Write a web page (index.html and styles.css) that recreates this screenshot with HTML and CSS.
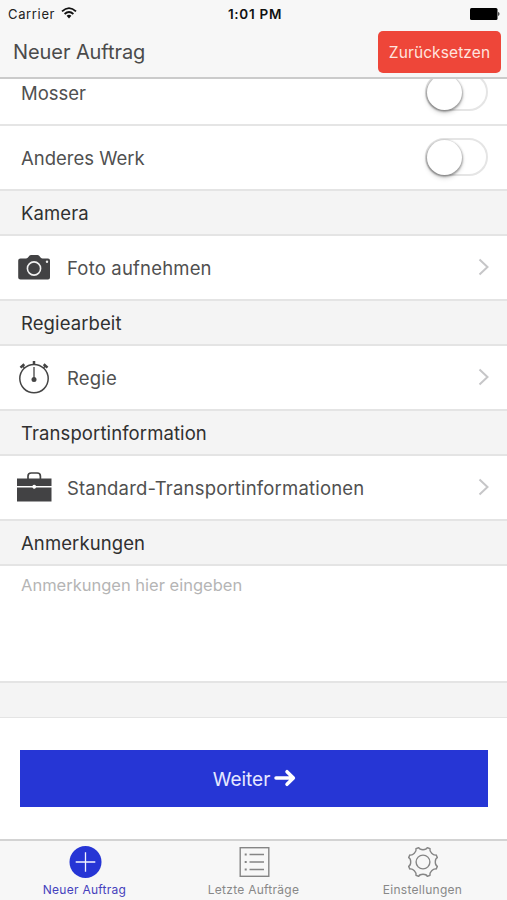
FILE: index.html
```html
<!DOCTYPE html>
<html lang="de">
<head>
<meta charset="utf-8">
<title>Neuer Auftrag</title>
<link rel="stylesheet" href="styles.css">
</head>
<body>
<div class="app">
  <header class="header">
    <div class="status">
      <div class="carrier"><span class="carrier-name">Carrier</span>
        <svg class="wifi" width="16" height="12" viewBox="0 0 16 12" fill="none" stroke="#111" stroke-width="1.8"><path d="M1 4.4Q8-2.2 15 4.4M3.6 7Q8 3 12.4 7"/><path d="M5.6 8.8Q8 6.8 10.4 8.8L8 11.4Z" fill="#111" stroke="none"/></svg>
      </div>
      <span class="clock">1:01 PM</span>
      <svg class="battery" width="31" height="12" viewBox="0 0 31 12"><rect width="27.500" height="12" rx="1.500"/><path d="M28.300 3.800Q30.600 6 28.300 8.200Z"/></svg>
    </div>
    <div class="nav">
      <h1 class="title">Neuer Auftrag</h1>
      <button class="reset">Zurücksetzen</button>
    </div>
  </header>

  <main class="content">
    <div class="row row-scrolled"><span class="label short">Mosser</span><span class="toggle"><span class="knob"></span></span></div>
    <div class="row"><span class="label short">Anderes Werk</span><span class="toggle"><span class="knob"></span></span></div>

    <h2 class="section">Kamera</h2>
    <div class="row">
      <svg class="icon" width="36" height="36" viewBox="0 0 36 36"><path fill="#424244" d="M4.500 9.500H10Q11 9.500 11.700 8.700L13.600 6.600Q14.200 6 15 6H21.500Q22.300 6 22.900 6.600L24.800 8.700Q25.500 9.500 26.500 9.500H32Q34 9.500 34 11.500V28.500Q34 30.500 32 30.500H4.500Q2.200 30.500 2.200 28.500V11.500Q2.200 9.500 4.500 9.500Z"/><circle cx="18" cy="19.500" r="6.600" fill="none" stroke="#f1f1f1" stroke-width="1.600"/><circle cx="31" cy="12.800" r="1.200" fill="#eee"/></svg>
      <span class="label">Foto aufnehmen</span>
      <svg class="chevron" width="12" height="18" viewBox="0 0 12 18"><path d="M1.500 1.500L9.500 9L1.500 16.500"/></svg>
    </div>

    <h2 class="section">Regiearbeit</h2>
    <div class="row">
      <svg class="icon" width="36" height="36" viewBox="0 0 36 36" fill="none" stroke="#454545"><circle cx="18" cy="19.600" r="14.200" stroke-width="1.500"/><path d="M18 8V21" stroke-width="1.300"/><path d="M18 2V6" stroke-width="2.500"/><path d="M4.500 8.600L8.300 5.200M27.700 5.200L31.500 8.600" stroke-width="2.600"/><path d="M6.200 6.500L8.600 9M29.800 6.500L27.400 9" stroke-width="1.500"/><circle cx="18" cy="20.500" r="2.500" fill="#454545" stroke="none"/></svg>
      <span class="label">Regie</span>
      <svg class="chevron" width="12" height="18" viewBox="0 0 12 18"><path d="M1.500 1.500L9.500 9L1.500 16.500"/></svg>
    </div>

    <h2 class="section">Transportinformation</h2>
    <div class="row">
      <svg class="icon" width="36" height="36" viewBox="0 0 36 36"><path fill="none" stroke="#444" stroke-width="1.700" d="M12 10V7.200Q12 4 15.200 4H21.200Q24.400 4 24.400 7.200V10"/><path fill="#424244" d="M1 9.500H35.500V17H20Q19.500 15.700 18.200 15.700T16.400 17H1ZM1 18.600H16.400Q17 19.800 18.200 19.800T20 18.600H35.500V32.500H1Z"/><circle cx="18.200" cy="17.800" r="1.400" fill="#fff"/></svg>
      <span class="label">Standard-Transportinformationen</span>
      <svg class="chevron" width="12" height="18" viewBox="0 0 12 18"><path d="M1.500 1.500L9.500 9L1.500 16.500"/></svg>
    </div>

    <h2 class="section">Anmerkungen</h2>
    <div class="notes">Anmerkungen hier eingeben</div>
    <div class="divider"></div>
    <div class="action">
      <button class="next"><span>Weiter</span><svg width="22" height="18" viewBox="0 0 22 18" fill="none" stroke="#fff" stroke-width="3.500" stroke-linejoin="round"><path stroke-linecap="round" d="M2 9H18.500M13 2.700L19.400 9L13 15.300"/></svg></button>
    </div>
  </main>

  <nav class="tabs">
    <a class="tab active">
      <svg width="34" height="34" viewBox="0 0 34 34"><circle cx="17.500" cy="17" r="16" fill="#2635d5"/><path d="M7.700 17H27.300M17.500 7.200V26.800" stroke="#f4f4ff" stroke-width="1.300"/></svg>
      <span>Neuer Auftrag</span>
    </a>
    <a class="tab">
      <svg width="34" height="34" viewBox="0 0 34 34" fill="none" stroke="#858585" stroke-width="1.400"><rect x="3.200" y="2.700" width="28.600" height="28.600"/><path d="M12.500 9.500H27M12.500 17H27M12.500 24.500H27"/><path d="M7.700 9.500H9.700M7.700 17H9.700M7.700 24.500H9.700" stroke-width="2"/></svg>
      <span>Letzte Aufträge</span>
    </a>
    <a class="tab">
      <svg width="34" height="34" viewBox="-17 -17 34 34" fill="none" stroke="#858585" stroke-width="1.400" stroke-linejoin="round"><circle r="6.900"/><path d="M-4.390-14.340C-3-11.600 3-11.600 4.390-14.340L7.040-13.240C6.080-10.320 10.320-6.080 13.240-7.040L14.340-4.390C11.600-3 11.600 3 14.340 4.390L13.240 7.040C10.320 6.080 6.080 10.320 7.040 13.240L4.390 14.340C3 11.600-3 11.600-4.390 14.340L-7.040 13.240C-6.080 10.320-10.320 6.080-13.240 7.040L-14.340 4.390C-11.600 3-11.600-3-14.340-4.390L-13.240-7.040C-10.320-6.080-6.080-10.320-7.040-13.240Z"/></svg>
      <span>Einstellungen</span>
    </a>
  </nav>
</div>
</body>
</html>
```

FILE: styles.css
```css
* { box-sizing: border-box; }
body { margin: 0; background: #fff; font-family: Inter, Roboto, sans-serif; color: #505050; }
h1, h2 { margin: 0; font-weight: 400; }
button { border: 0; padding: 0; font-family: inherit; }
svg { flex: none; display: block; }
.app { width: 507px; height: 900px; display: flex; flex-direction: column; overflow: hidden; }

.header { position: relative; z-index: 1; flex: none; height: 79px; background: #f7f7f7; border-bottom: 2px solid #cbcbcb; }
.status { display: grid; grid-template-columns: 1fr auto 1fr; align-items: center; height: 27px; padding: 0 5px 0 8px; color: #222; font-size: 13px; }
.carrier { display: flex; align-items: center; gap: 6px; letter-spacing: .65px; }
.wifi { margin-top: -2px; }
.clock { color: #111; font-size: 13.5px; font-weight: 600; letter-spacing: .7px; }
.battery { justify-self: end; margin-right: 1px; }
.nav { display: flex; align-items: center; justify-content: space-between; height: 50px; padding: 0 6px 0 13px; }
.title { font-size: 20px; letter-spacing: -.08px; color: #4b4b4b; }
.reset { width: 123px; height: 42px; border-radius: 5px; background: #ee4639; color: #ffe4df; font-size: 15.5px; letter-spacing: .1px; }

.content { flex: 1; min-height: 0; overflow: hidden; }
.row { display: flex; align-items: center; height: 63px; padding: 0 17px 0 21px; }
.row-scrolled { height: 65px; margin-top: -18px; border-bottom: 2px solid #e5e5e5; }
.label { font-size: 18.5px; letter-spacing: .18px; white-space: nowrap; }
.short { letter-spacing: 0; }
.icon { margin: -1px 15px 0 -5px; }
.chevron { margin: -1px 0 0 auto; fill: none; stroke: #c6c6c8; stroke-width: 2; }
.toggle { width: 63px; height: 38px; margin: -2px 2px 0 auto; border: 2px solid #e5e5e5; border-radius: 19px; }
.knob { display: block; width: 35px; height: 35px; border-radius: 50%; background: #fff; box-shadow: 0 1px 2px 1px rgba(0,0,0,.3), 0 3px 5px rgba(0,0,0,.16); }
.section { display: flex; align-items: center; height: 47px; padding-left: 21px; border: solid #e4e4e4; border-width: 2px 0; background: #f4f4f4; color: #303030; font-size: 18.5px; letter-spacing: .1px; }
.notes { height: 115px; padding: 9px 21px; color: #b5b5b5; font-size: 16.5px; line-height: 21px; }
.divider { height: 37px; border: solid #e4e4e4; border-width: 2px 0 1px; background: #f4f4f4; }
.action { padding: 32px 19px 0 20px; }
.next { display: flex; align-items: center; justify-content: center; gap: 4px; width: 100%; height: 57px; padding: 1px 0 0 1px; background: #2636d5; color: #e5e8ff; font-size: 19px; }
.next svg { margin-top: -2px; }

.tabs { flex: none; display: grid; grid-template-columns: repeat(3, 1fr); height: 61px; border-top: 2px solid #d3d3d3; background: #f7f7f7; }
.tab { display: flex; flex-direction: column; align-items: center; padding-top: 4px; color: #888; font-size: 12px; line-height: 16px; letter-spacing: .27px; }
.tab span { margin-top: 3px; }
.active { color: #4541bd; }
```
